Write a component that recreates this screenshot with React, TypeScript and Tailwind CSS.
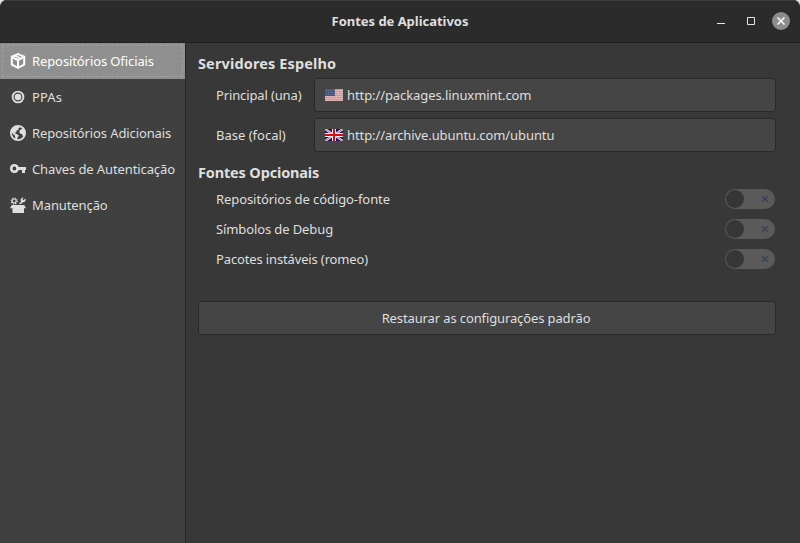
import type { ReactNode } from "react";

const navItems: { label: string; icon: ReactNode; tracking: string }[] = [
  {
    label: "Repositórios Oficiais",
    tracking: "tracking-[-0.1px]",
    icon: (
      <svg width="16" height="16" viewBox="0 0 16 16" fill="none" stroke="currentColor" strokeWidth="2" strokeLinejoin="round">
        <path d="M8 1.1 14.2 3.7v8L8 14.9 1.8 11.7v-8Z" />
        <path d="M1.8 4.1 8 7l6.2-2.9M8 7v7.7" />
        <path d="M4.6 2.7l6.4 2.7" strokeWidth="1.5" />
      </svg>
    ),
  },
  {
    label: "PPAs",
    tracking: "tracking-[0.1px]",
    icon: (
      <svg width="16" height="16" viewBox="0 0 16 16" fill="none" stroke="currentColor">
        <circle cx="8" cy="8" r="5.4" strokeWidth="1.9" />
        <circle cx="8" cy="8" r="3.3" fill="currentColor" stroke="none" />
      </svg>
    ),
  },
  {
    label: "Repositórios Adicionais",
    tracking: "tracking-[-0.11px]",
    icon: (
      <svg width="16" height="16" viewBox="0 0 16 16">
        <circle cx="8" cy="8" r="7.1" fill="none" stroke="currentColor" strokeWidth="1.8" />
        <path d="M2 4.3 5 1.5 10 1l.2 1.5-1.8.6.4 1.3-2 1.2L6 7.2 4.4 8l2.7 1.2 1.8 1.4-1.2 1.8-.8 2.7-1.6-.7-.3-3.6L2.6 8.6 1 7Z" fill="currentColor" />
        <path d="m10 5.2 2-1.7 2 .6 1.1 3.2-.5 3.1-1.6 1.4-1-2.8-2-.6-.8-1.7Z" fill="currentColor" />
      </svg>
    ),
  },
  {
    label: "Chaves de Autenticação",
    tracking: "tracking-[-0.1px]",
    icon: (
      <svg width="16" height="16" viewBox="0 0 16 16" fill="currentColor">
        <path fillRule="evenodd" d="M4.4 3a4.5 4.5 0 0 1 4.3 3H16v3h-1v3h-3V9H8.7A4.5 4.5 0 1 1 4.4 3Zm0 2.6a1.9 1.9 0 1 0 0 3.8 1.9 1.9 0 0 0 0-3.8Z" />
      </svg>
    ),
  },
  {
    label: "Manutenção",
    tracking: "tracking-[-0.1px]",
    icon: (
      <svg width="16" height="16" viewBox="0 0 16 16" fill="currentColor">
        <circle cx="4.2" cy="4" r="2" fill="none" stroke="currentColor" strokeWidth="1.1" />
        <circle cx="4.2" cy="4" r="3" fill="none" stroke="currentColor" strokeWidth="1.2" strokeDasharray="1.18 1.18" />
        <path d="M8.7 7 11 4.8 10.6 2.2 12.8.2l.6.2-.8 2 1 .8L15.5 1.6l.4.7-1 2.4-2.4.9L11 7Z" />
        <path d="M1.8 8h12.4L16 11.2h-2V16H2.5v-4.8H0Z" />
      </svg>
    ),
  },
];

const mirrors = [
  { label: "Principal (una)", url: "http://packages.linuxmint.com", flag: <UsFlag />, labelTracking: "tracking-[-0.13px]", tracking: "tracking-[-0.09px]" },
  { label: "Base (focal)", url: "http://archive.ubuntu.com/ubuntu", flag: <UkFlag />, labelTracking: "tracking-[0px]", tracking: "tracking-[-0.09px]" },
];

const options = [
  { label: "Repositórios de código-fonte", tracking: "tracking-[-0.08px]" },
  { label: "Símbolos de Debug", tracking: "tracking-[-0.11px]" },
  { label: "Pacotes instáveis (romeo)", tracking: "tracking-[-0.14px]" },
];

function UsFlag() {
  return (
    <svg width="18" height="12" viewBox="0 0 18 12" shapeRendering="crispEdges">
      <rect width="18" height="12" fill="#e0b5b8" />
      <path d="M0 .5h18M0 2.5h18M0 4.5h18M0 6.5h18M0 8.5h18M0 10.5h18" stroke="#da9398" />
      <rect width="10" height="7" fill="#465781" />
      <path d="M1 1.5h9M1 3.5h9M1 5.5h9" stroke="#63749b" strokeDasharray="1 1" />
    </svg>
  );
}

function UkFlag() {
  return (
    <svg width="18" height="12" viewBox="0 0 18 12">
      <rect width="18" height="12" fill="#171568" />
      <path d="m0 0 18 12M18 0 0 12" stroke="#eee" strokeWidth="2.2" />
      <path d="m0 0 18 12M18 0 0 12" stroke="#d82735" strokeWidth=".7" />
      <path d="M9 0v12M0 6h18" stroke="#f3eded" strokeWidth="4" />
      <path d="M9 0v12M0 6h18" stroke="#d80b18" strokeWidth="2" />
    </svg>
  );
}

function Switch() {
  return (
    <div role="switch" aria-checked="false" className="flex h-5 w-[50px] items-center justify-between rounded-full bg-[#5a5a5a] pl-px pr-[7px]">
      <span className="h-[18px] w-[18px] rounded-full bg-[#363636]" />
      <svg width="6" height="6" viewBox="0 0 6 6" stroke="#3d4559" strokeWidth="1.7">
        <path d="m.3.3 5.4 5.4M5.7.3.3 5.7" />
      </svg>
    </div>
  );
}

export default function App() {
  return (
    <div className="h-[543px] w-[800px] overflow-hidden bg-[#dedede] font-['Noto_Sans','Open_Sans',sans-serif] text-[13px] leading-[18px] text-[#dfdfdf]">
      <div className="flex h-full flex-col overflow-hidden rounded-t-[7px] bg-[#383838]">
        <header className="grid h-[43px] shrink-0 grid-cols-[1fr_auto_1fr] items-center border-b border-t border-b-[#202020] border-t-[#3b3b3b] bg-[#2b2b2b] pb-[2px]">
          <span />
          <h1 className="text-[13px] font-bold tracking-[-0.03px]">Fontes de Aplicativos</h1>
          <div className="flex items-center justify-end pr-[10px]">
            <svg width="8" height="8" viewBox="0 0 8 8" className="mr-[22px]"><path d="M0 6.5h8" stroke="#e6e6e6" /></svg>
            <svg width="8" height="8" viewBox="0 0 8 8" className="mr-[17px]"><path d="M.5.5h7v7h-7z" fill="none" stroke="#e6e6e6" /></svg>
            <span className="flex h-[18px] w-[18px] items-center justify-center rounded-full bg-[#8c8c8c]">
              <svg width="8" height="8" viewBox="0 0 8 8" stroke="#fff" strokeWidth="1.5"><path d="m.5.5 7 7M7.5.5l-7 7" /></svg>
            </span>
          </div>
        </header>
        <div className="flex min-h-0 flex-1">
          <nav className="w-[186px] shrink-0 border-r border-[#292929] bg-[#404040]">
            {navItems.map((item, i) => (
              <div key={item.label} className={i === 0 ? "h-9 bg-[#8f8f8f] p-[2px] text-white" : "h-9 p-[2px]"}>
                <div className={`flex h-full items-center gap-[6px] border border-dashed pl-[7px] ${i === 0 ? "border-[#a0a0a0]" : "border-transparent"}`}>
                  {item.icon}
                  <span className={`whitespace-nowrap ${item.tracking}`}>{item.label}</span>
                </div>
              </div>
            ))}
          </nav>
          <main className="flex-1 pl-3 pr-6 pt-[11px]">
            <h2 className="h-6 text-[14.5px] font-bold leading-[18px] tracking-[0.13px]">Servidores Espelho</h2>
            <div className="grid gap-[6px]">
              {mirrors.map((m) => (
                <div key={m.label} className="flex h-[34px] items-center pl-[18px]">
                  <span className="w-[98px] shrink-0 whitespace-nowrap"><span className={m.labelTracking}>{m.label}</span></span>
                  <button className="flex h-full flex-1 items-center gap-1 rounded-[3px] border border-[#292929] bg-[#454545] pl-[10px]">
                    {m.flag}
                    <span className={`whitespace-nowrap ${m.tracking}`}>{m.url}</span>
                  </button>
                </div>
              ))}
            </div>
            <h2 className="mt-[11px] h-[26px] text-[14.5px] font-bold leading-[18px] tracking-[-0.16px]">Fontes Opcionais</h2>
            <div className="grid gap-[10px] pl-[18px] pr-px">
              {options.map((o) => (
                <div key={o.label} className="flex h-5 items-center justify-between">
                  <span className={o.tracking}>{o.label}</span>
                  <Switch />
                </div>
              ))}
            </div>
            <button className="mt-8 h-[34px] w-full rounded-[3px] border border-[#292929] bg-[#454545] pr-[2px] text-center">
              <span className="tracking-[-0.12px]">Restaurar as configurações padrão</span>
            </button>
          </main>
        </div>
      </div>
    </div>
  );
}
